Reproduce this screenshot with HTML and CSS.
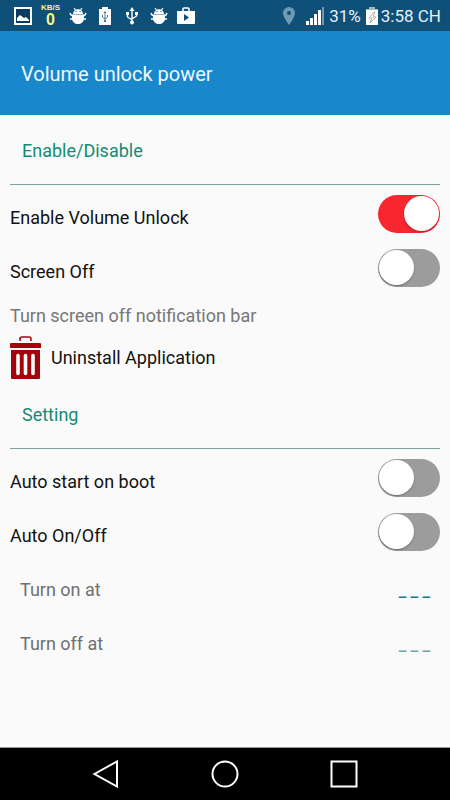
FILE: index.html
```html
<!DOCTYPE html>
<html lang="en">
<head>
    <meta charset="UTF-8">
    <meta name="viewport" content="width=device-width, initial-scale=1.0">
    <title>Volume unlock power</title>
    <link rel="stylesheet" href="styles.css">
</head>
<body>
    <svg class="symbols" aria-hidden="true">
        <symbol id="icon-bug" viewBox="0 0 18 18">
            <path d="M5 1l1.500 2M13 1l-1.500 2" stroke="#fff" stroke-width="1.200"/>
            <path d="M4 7c0-6.500 10-6.500 10 0z" fill="#fff"/>
            <path d="M3 8h12v3c0 8-12 8-12 0z" fill="#fff"/>
            <path d="M1 6l1 2 2 1M17 6l-1 2-2 1M1 12h16" fill="none" stroke="#fff" stroke-width="1.600"/>
            <path d="M3 7.500h12" stroke="#8fb0c6"/>
            <path d="M6.500 4.500h1M10.500 4.500h1" stroke="#0f5078"/>
        </symbol>
    </svg>

    <div class="status-bar">
        <div class="status-icons">
            <svg class="icon" viewBox="0 0 18 18">
                <path d="M1 1h16v16H1z" fill="#0a3a66" stroke="#fff" stroke-width="2"/>
                <path d="M3 14v-3l3-3 4 3 2-1 3 3v1z" fill="#fff"/>
            </svg>
            <div class="net-speed">
                <span class="net-unit">KB/S</span>
                <span class="net-value">0</span>
            </div>
            <svg class="icon"><use href="#icon-bug"/></svg>
            <svg class="icon" viewBox="0 0 18 18">
                <path d="M3 2h3V0h6v2h3v16H3z" fill="#fff"/>
                <path d="M9 5v9M6.500 8v2L9 12l2.500-2V8" fill="none" stroke="#4a7896"/>
                <path d="M9 4l1.500 2h-3zM8 13h2v2H8z" fill="#4a7896"/>
            </svg>
            <svg class="icon" viewBox="0 0 18 18">
                <path d="M9 2v13M4.500 6v4L9 13M13.500 6v3L9 12" fill="none" stroke="#fff" stroke-width="1.400"/>
                <path d="M9 0l2.500 4h-5zM3 5h3v3H3zM12 5h3v3h-3z" fill="#fff"/>
                <circle cx="9" cy="15.500" r="2" fill="#fff"/>
            </svg>
            <svg class="icon"><use href="#icon-bug"/></svg>
            <svg class="icon" viewBox="0 0 18 18">
                <path d="M6 5V2q0-1 1-1h4q1 0 1 1v3" fill="none" stroke="#fff" stroke-width="1.600"/>
                <path d="M0 4h18v12q0 1-1 1H1q-1 0-1-1z" fill="#fff"/>
                <path d="M7 7l5 3.500L7 14z" fill="#0f5078"/>
            </svg>
        </div>
        <div class="status-info">
            <svg class="pin" viewBox="0 0 12 18">
                <path d="M6 0a6 6 0 0 1 6 6c0 4-6 12-6 12S0 10 0 6a6 6 0 0 1 6-6z" fill="#6f9ab3"/>
                <circle cx="6" cy="6" r="2" fill="#0f5078"/>
            </svg>
            <svg class="signal" viewBox="0 0 18 18">
                <path d="M0 14h3v4H0zM4 11h3v7H4zM8 7h3v11H8zM12 3h3v15h-3z" fill="#fff"/>
                <path d="M16 0h2v18h-2z" fill="#6f9ab3"/>
            </svg>
            <span>31%</span>
            <svg class="battery" viewBox="0 0 12 18">
                <path d="M0 3V2h3V0h6v2h3v1z" fill="#9db8c9"/>
                <path d="M0 3h12v15H0z" fill="#fff"/>
                <path d="M8 5l-5 6h3l-2 5 6-6H7l2-5z" fill="#fff" stroke="#9a9a9a" stroke-width=".8"/>
            </svg>
            <span>3:58 CH</span>
        </div>
    </div>

    <header class="app-bar">
        <h1>Volume unlock power</h1>
    </header>

    <main class="content">
        <h2 class="section-title">Enable/Disable</h2>
        <div class="row">
            <label for="volume-unlock">Enable Volume Unlock</label>
            <input type="checkbox" class="switch" id="volume-unlock" checked>
        </div>
        <div class="row">
            <label for="screen-off">Screen Off</label>
            <input type="checkbox" class="switch" id="screen-off">
        </div>
        <p class="hint">Turn screen off notification bar</p>
        <button type="button" class="uninstall">
            <svg class="trash" viewBox="0 0 31 43">
                <path d="M10 5V3q0-2 2-2h7q2 0 2 2v2" fill="none" stroke="#a0060c" stroke-width="1.600"/>
                <path d="M1 7h29q1 0 1 1v4H0V8q0-1 1-1zM1 14h29v28q0 1-1 1H2q-1 0-1-1z" fill="#a0060c"/>
                <path d="M8 19.500v18M15.500 19.500v18M23 19.500v18" stroke="#fafafa" stroke-width="3.600" stroke-linecap="round"/>
            </svg>
            Uninstall Application
        </button>

        <h2 class="section-title">Setting</h2>
        <div class="row">
            <label for="auto-start">Auto start on boot</label>
            <input type="checkbox" class="switch" id="auto-start">
        </div>
        <div class="row">
            <label for="auto-on-off">Auto On/Off</label>
            <input type="checkbox" class="switch" id="auto-on-off">
        </div>
        <div class="schedule">
            <div class="row">
                <span>Turn on at</span>
                <span class="time">_ _ _</span>
            </div>
            <div class="row">
                <span>Turn off at</span>
                <span class="time time-off">_ _ _</span>
            </div>
        </div>
    </main>

    <nav class="nav-bar">
        <button type="button" aria-label="Back">
            <svg viewBox="0 0 28 28"><path d="M25 1.500v25L2.500 14z"/></svg>
        </button>
        <button type="button" aria-label="Home">
            <svg viewBox="0 0 28 28"><circle cx="14" cy="14" r="12.500"/></svg>
        </button>
        <button type="button" aria-label="Recent apps">
            <svg viewBox="0 0 28 28"><path d="M1.500 1.500h25v25h-25z"/></svg>
        </button>
    </nav>
</body>
</html>
```
FILE: styles.css
```css
* {
    box-sizing: border-box;
}
body {
    display: flex;
    flex-direction: column;
    min-height: 100vh;
    margin: 0;
    background-color: #fafafa;
    color: #111;
    font-family: Roboto, sans-serif;
    font-size: 18px;
    line-height: 24px;
}
h1, h2, p {
    margin: 0;
    font-weight: 400;
}
button {
    border: none;
    padding: 0;
    background: none;
    color: inherit;
    font: inherit;
    cursor: pointer;
}
.symbols {
    display: none;
}

.status-bar {
    display: flex;
    justify-content: space-between;
    align-items: center;
    height: 31px;
    padding: 0 9px 0 14px;
    background-color: #0f5078;
    color: #e8f0f5;
}
.status-icons {
    display: flex;
    align-items: center;
    gap: 9px;
}
.icon,
.signal {
    width: 18px;
    height: 18px;
}
.net-speed {
    display: flex;
    flex-direction: column;
    align-items: center;
    width: 19px;
    color: #f5f58a;
    font-family: "Liberation Sans", sans-serif;
    font-weight: 700;
}
.net-unit {
    font-size: 8px;
    line-height: 8px;
}
.net-value {
    font-size: 16px;
    line-height: 16px;
}
.status-info {
    display: flex;
    align-items: center;
    gap: 5px;
    font-size: 17px;
}
.pin {
    width: 12px;
    height: 18px;
    margin-right: 6px;
}
.battery {
    width: 12px;
    height: 18px;
    margin-right: -2px;
}

.app-bar {
    display: flex;
    align-items: center;
    height: 84px;
    padding: 2px 21px 0;
    background-color: #1887cc;
    color: #f0f8fd;
}
.app-bar h1 {
    font-size: 20px;
}

.content {
    flex: 1;
    padding: 0 10px;
}
.section-title {
    margin-bottom: 2px;
    border-bottom: 1px solid #7fa0a0;
    padding: 24px 12px 21px;
    color: #128c74;
    font-size: 18px;
}
.row {
    display: flex;
    justify-content: space-between;
    align-items: center;
    height: 54px;
}
.row label {
    padding-top: 8px;
}
.switch {
    appearance: none;
    width: 62px;
    height: 38px;
    margin: 0;
    border-radius: 19px;
    padding: 1px;
    background-color: #9c9c9c;
    cursor: pointer;
}
.switch::before {
    content: "";
    display: block;
    width: 35px;
    height: 35px;
    border-radius: 50%;
    background-color: #fff;
    box-shadow: 0 1px 2px rgba(0, 0, 0, 0.3);
}
.switch:checked {
    background-color: #f8262f;
}
.switch:checked::before {
    margin-left: auto;
}
.hint {
    padding: 9px 0 8px;
    color: #777;
}
.uninstall {
    display: flex;
    align-items: center;
    gap: 10px;
    height: 43px;
}
.trash {
    width: 31px;
    height: 43px;
}
.schedule {
    padding: 4px 10px;
    color: #707070;
}
.time {
    color: #17798a;
    font-size: 17px;
    font-weight: 500;
}
.time-off {
    color: #6aa5ad;
}

.nav-bar {
    display: flex;
    justify-content: center;
    align-items: center;
    gap: 91px;
    height: 53px;
    border-top: 1px solid #999;
    background-color: #000;
}
.nav-bar button {
    width: 28px;
    height: 28px;
}
.nav-bar svg {
    display: block;
    fill: none;
    stroke: #fff;
    stroke-width: 2;
}
```
